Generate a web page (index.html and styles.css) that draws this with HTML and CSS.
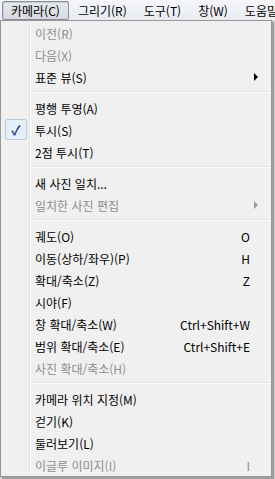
FILE: index.html
```html
<!DOCTYPE html>
<html lang="ko">

<head>
  <meta charset="UTF-8">
  <title>카메라 메뉴</title>
  <link rel="stylesheet" href="styles.css">
</head>

<body>
  <div class="menubar">
    <span class="top open">카메라(C)</span>
    <span class="top">그리기(R)</span>
    <span class="top">도구(T)</span>
    <span class="top">창(W)</span>
    <span class="top">도움말(H)</span>
  </div>

  <div class="popup">
    <div class="item off"><span class="label">이전(R)</span></div>
    <div class="item off"><span class="label">다음(X)</span></div>
    <div class="item"><span class="label">표준 뷰(S)</span><span class="arrow"></span></div>
    <div class="sep"></div>
    <div class="item"><span class="label">평행 투영(A)</span></div>
    <div class="item"><span class="check">✓</span><span class="label">투시(S)</span></div>
    <div class="item"><span class="label">2점 투시(T)</span></div>
    <div class="sep"></div>
    <div class="item"><span class="label">새 사진 일치...</span></div>
    <div class="item off"><span class="label">일치한 사진 편집</span><span class="arrow"></span></div>
    <div class="sep"></div>
    <div class="item"><span class="label">궤도(O)</span><span class="key">O</span></div>
    <div class="item"><span class="label">이동(상하/좌우)(P)</span><span class="key">H</span></div>
    <div class="item"><span class="label">확대/축소(Z)</span><span class="key">Z</span></div>
    <div class="item"><span class="label">시야(F)</span></div>
    <div class="item"><span class="label">창 확대/축소(W)</span><span class="key">Ctrl+Shift+W</span></div>
    <div class="item"><span class="label">범위 확대/축소(E)</span><span class="key">Ctrl+Shift+E</span></div>
    <div class="item off"><span class="label">사진 확대/축소(H)</span></div>
    <div class="sep"></div>
    <div class="item"><span class="label">카메라 위치 지정(M)</span></div>
    <div class="item"><span class="label">걷기(K)</span></div>
    <div class="item"><span class="label">둘러보기(L)</span></div>
    <div class="item off"><span class="label">이글루 이미지(I)</span><span class="key">I</span></div>
  </div>
</body>

</html>
```

FILE: styles.css
```css
* {
  margin: 0;
  padding: 0;
  box-sizing: border-box;
}

body {
  width: 275px;
  height: 479px;
  overflow: hidden;
  background: #d6d6d6;
  font-family: "Noto Sans CJK KR", "Noto Sans", sans-serif;
  font-size: 12px;
  color: #000;
}

.menubar {
  display: flex;
  height: 20px;
  padding: 1px 0 0 2px;
  background: linear-gradient(#f5f7fa, #e8ebef);
  white-space: nowrap;
  overflow: hidden;
}

.top {
  height: 19px;
  line-height: 17px;
  padding: 0 7px 0 6px;
  margin-right: 2px;
  border: 1px solid transparent;
}

.top.open {
  padding: 0 8px 0 8px;
  border-color: #8a8f96;
  border-radius: 2px;
  background: linear-gradient(#e4e7eb, #d7dbe0);
  box-shadow: inset 1px 1px 0 #c9cdd2;
}

.popup {
  width: 272px;
  height: 457px;
  padding: 1px 2px;
  background: #f0f0f0;
  border: 1px solid #979797;
  box-shadow: 2px 2px 1px rgba(0, 0, 0, 0.25);
  position: relative;
}

/* left gutter line */
.popup::before {
  content: "";
  position: absolute;
  left: 28px;
  top: 1px;
  bottom: 1px;
  width: 1px;
  background: #e2e3e3;
  border-right: 1px solid #fff;
  box-sizing: content-box;
}

.item {
  display: flex;
  align-items: center;
  height: 22px;
  padding: 0 19px 0 32px;
  position: relative;
}

.item.off {
  color: #8d8d8d;
}

.label {
  flex: 1;
}

.key {
  text-align: right;
}

.arrow {
  position: absolute;
  right: 11px;
  top: 7px;
  width: 0;
  height: 0;
  border-top: 4px solid transparent;
  border-bottom: 4px solid transparent;
  border-left: 4px solid #000;
}

.item.off .arrow {
  border-left-color: #9a9a9a;
}

.check {
  position: absolute;
  left: 2px;
  top: 0;
  width: 22px;
  height: 21px;
  line-height: 19px;
  text-align: center;
  color: #1b3f8c;
  font-weight: bold;
  font-size: 13px;
  border: 1px solid #b5cbe4;
  border-radius: 2px;
  background: #e6eef8;
}

.sep {
  height: 9px;
  margin-left: 30px;
  position: relative;
}

.sep::before {
  content: "";
  position: absolute;
  left: 0;
  right: 0;
  top: 3px;
  height: 1px;
  background: #e0e0e0;
  border-bottom: 1px solid #fff;
  box-sizing: content-box;
}
```
